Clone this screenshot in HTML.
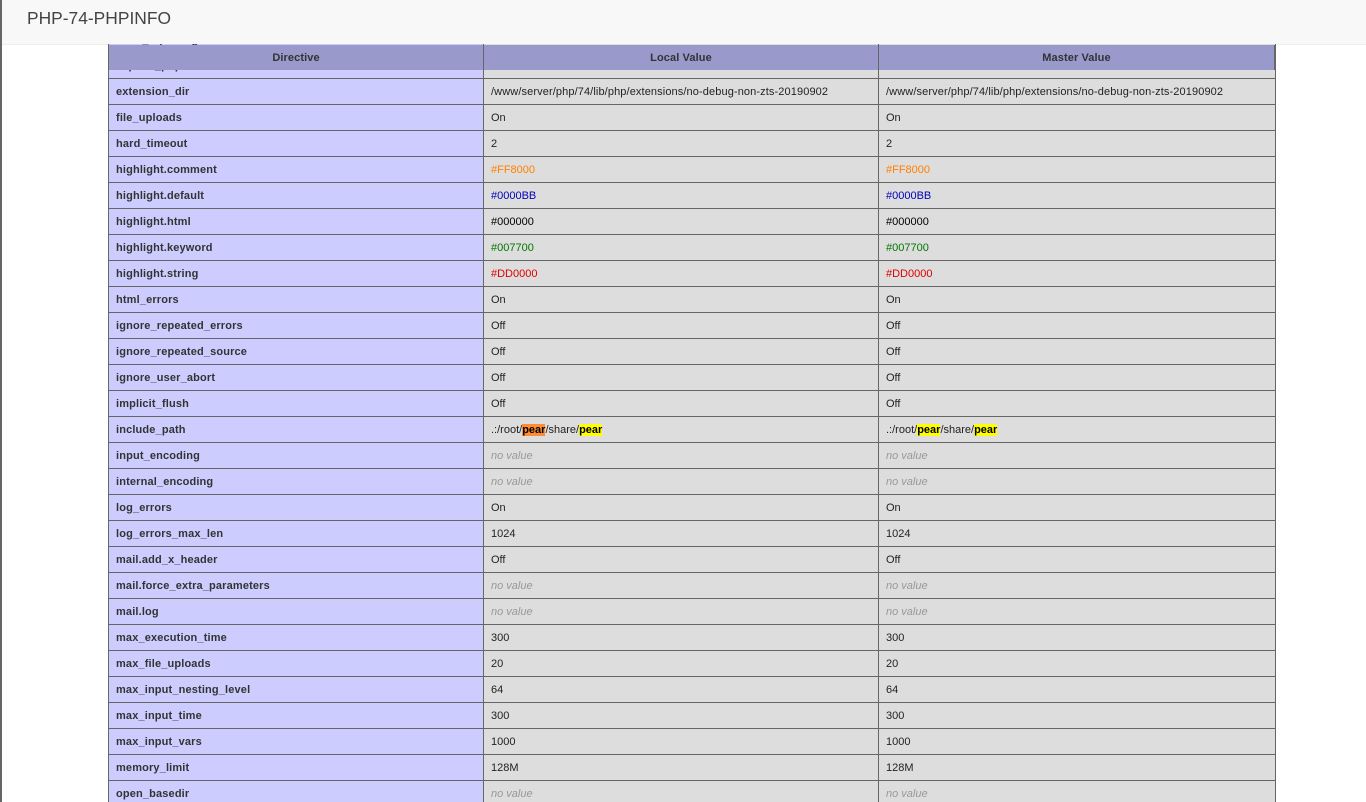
<!DOCTYPE html>
<html><head><meta charset="utf-8"><title>PHP-74-PHPINFO</title>
<style>
html,body{margin:0;padding:0;width:1366px;height:802px;overflow:hidden;background:#fff}
body{position:relative;font-family:"Liberation Sans",Arial,sans-serif;color:#222}
#lb{position:absolute;left:0;top:0;width:2px;height:802px;background:#666;z-index:5}
#top{position:absolute;left:2px;top:0;width:1364px;height:44px;background:#f8f8f8;z-index:4}
#tl{position:absolute;left:2px;top:44px;width:106px;height:1px;background:#eee;z-index:4}
#tr{position:absolute;left:1276px;top:44px;width:90px;height:1px;background:#eee;z-index:4}
#top span{position:absolute;left:25px;top:8px;font-size:17.4px;line-height:20px;color:#444}
table{border-collapse:collapse;table-layout:fixed;position:absolute;left:108px;width:1167px;font-size:11px}
td,th{border:1px solid #666;height:23px;padding:2px 7px 0;box-sizing:content-box;line-height:23px;white-space:nowrap;overflow:hidden;vertical-align:middle}
#m{top:26px}
td{background:#ddd;color:#222}
td.p{letter-spacing:.11px}
td.e{background:#ccf;color:#333;font-weight:bold;letter-spacing:.15px}
i{color:#999}
b{font-weight:bold;color:#000;background:#ff0}
b.c{background:#ff8c33}
#h{position:absolute;left:108px;top:45px;width:1167px;height:25px;background:#99c;z-index:3;box-sizing:border-box;border-left:1px solid #666;border-right:1px solid #666;font-size:11px;font-weight:bold;letter-spacing:.1px;line-height:26px;color:#333}
#h div{position:absolute;top:0;height:25px;text-align:center}
#h div+div{border-left:1px solid #666}
</style></head><body>
<div id="lb"></div>
<div id="top"><span>PHP-74-PHPINFO</span></div>
<div id="tl"></div><div id="tr"></div>
<div id="h"><div style="left:0;width:374px">Directive</div><div style="left:374px;width:394px">Local Value</div><div style="left:769px;width:395px">Master Value</div></div>
<table id="m"><colgroup><col style="width:375px"><col style="width:395px"><col style="width:397px"></colgroup>
<tr><td class="e">error_reporting</td><td><i>no value</i></td><td><i>no value</i></td></tr>
<tr><td class="e">expose_php</td><td>On</td><td>On</td></tr>
<tr><td class="e">extension_dir</td><td class="p">/www/server/php/74/lib/php/extensions/no-debug-non-zts-20190902</td><td class="p">/www/server/php/74/lib/php/extensions/no-debug-non-zts-20190902</td></tr>
<tr><td class="e">file_uploads</td><td>On</td><td>On</td></tr>
<tr><td class="e">hard_timeout</td><td>2</td><td>2</td></tr>
<tr><td class="e">highlight.comment</td><td style="color:#ff8000">#FF8000</td><td style="color:#ff8000">#FF8000</td></tr>
<tr><td class="e">highlight.default</td><td style="color:#0000bb">#0000BB</td><td style="color:#0000bb">#0000BB</td></tr>
<tr><td class="e">highlight.html</td><td style="color:#000">#000000</td><td style="color:#000">#000000</td></tr>
<tr><td class="e">highlight.keyword</td><td style="color:#007700">#007700</td><td style="color:#007700">#007700</td></tr>
<tr><td class="e">highlight.string</td><td style="color:#dd0000">#DD0000</td><td style="color:#dd0000">#DD0000</td></tr>
<tr><td class="e">html_errors</td><td>On</td><td>On</td></tr>
<tr><td class="e">ignore_repeated_errors</td><td>Off</td><td>Off</td></tr>
<tr><td class="e">ignore_repeated_source</td><td>Off</td><td>Off</td></tr>
<tr><td class="e">ignore_user_abort</td><td>Off</td><td>Off</td></tr>
<tr><td class="e">implicit_flush</td><td>Off</td><td>Off</td></tr>
<tr><td class="e">include_path</td><td>.:/root/<b class="c">pear</b>/share/<b>pear</b></td><td>.:/root/<b>pear</b>/share/<b>pear</b></td></tr>
<tr><td class="e">input_encoding</td><td><i>no value</i></td><td><i>no value</i></td></tr>
<tr><td class="e">internal_encoding</td><td><i>no value</i></td><td><i>no value</i></td></tr>
<tr><td class="e">log_errors</td><td>On</td><td>On</td></tr>
<tr><td class="e">log_errors_max_len</td><td>1024</td><td>1024</td></tr>
<tr><td class="e">mail.add_x_header</td><td>Off</td><td>Off</td></tr>
<tr><td class="e">mail.force_extra_parameters</td><td><i>no value</i></td><td><i>no value</i></td></tr>
<tr><td class="e">mail.log</td><td><i>no value</i></td><td><i>no value</i></td></tr>
<tr><td class="e">max_execution_time</td><td>300</td><td>300</td></tr>
<tr><td class="e">max_file_uploads</td><td>20</td><td>20</td></tr>
<tr><td class="e">max_input_nesting_level</td><td>64</td><td>64</td></tr>
<tr><td class="e">max_input_time</td><td>300</td><td>300</td></tr>
<tr><td class="e">max_input_vars</td><td>1000</td><td>1000</td></tr>
<tr><td class="e">memory_limit</td><td>128M</td><td>128M</td></tr>
<tr><td class="e">open_basedir</td><td><i>no value</i></td><td><i>no value</i></td></tr>
</table>
</body></html>
